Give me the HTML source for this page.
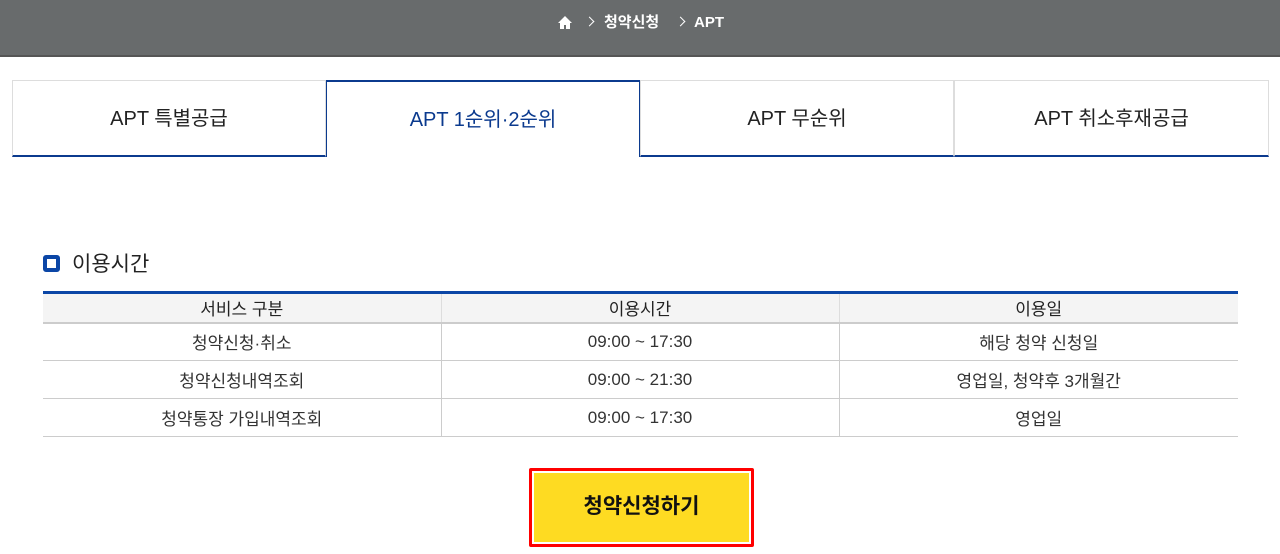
<!DOCTYPE html>
<html><head><meta charset="utf-8"><style>
*{margin:0;padding:0;box-sizing:border-box}
body{width:1280px;height:554px;background:#fff;font-family:"Liberation Sans","Noto Sans CJK KR",sans-serif;position:relative;overflow:hidden;color:#222}
.hd{position:absolute;left:0;top:0;width:1280px;height:57px;background:#686b6c;border-bottom:2px solid #555}
.bc{position:absolute;top:14px;color:#fff;font-size:15px;font-weight:bold;line-height:18px;white-space:nowrap}
.ch{position:absolute;top:13px;width:7px;height:7px;border-top:1.5px solid #fff;border-right:1.5px solid #fff;transform:rotate(45deg)}
.tab{position:absolute;top:80px;height:77px;width:314px;border:1px solid #ddd;border-bottom:2px solid #0b3a8e;text-align:center;line-height:76px;font-size:20px;color:#222}
.tab.on{border:1px solid #0b3a8e;border-top:2px solid #0b3a8e;border-bottom:none;color:#0b3a8e}
.tt{position:absolute;left:43px;top:252px;font-size:21px;line-height:26px}
.tt i{display:inline-block;width:17px;height:17px;border:4px solid #0b46a6;border-radius:3px;vertical-align:-1px;margin-right:12px}
table{position:absolute;left:43px;top:291px;width:1195px;border-collapse:collapse;border-top:3px solid #0b46a6;font-size:17px}
th{background:#f4f4f4;font-weight:normal;height:30px;border-bottom:2px solid #ccc;border-left:1px solid #ddd}
td{height:38px;text-align:center;border-bottom:1px solid #ccc;border-left:1px solid #ccc;color:#333}
th:first-child,td:first-child{border-left:none}
.btn{position:absolute;left:529px;top:468px;width:225px;height:79px;border:3px solid #f00;border-radius:2px;padding:2px}
.btn div{width:100%;height:100%;background:#fedb22;text-align:center;line-height:67px;font-size:21px;font-weight:bold;color:#111}
</style></head><body>
<div class="hd">
<svg width="14" height="13" viewBox="0 0 14 13" style="position:absolute;left:558px;top:16px"><path d="M7 0L0 7h2v6h4V9h2v4h4V7h2z" fill="#fff"/></svg>
<div class="ch" style="left:586px;top:18px"></div>
<div class="bc" style="left:604px">청약신청</div>
<div class="ch" style="left:677px;top:18px"></div>
<div class="bc" style="left:694px">APT</div>
</div>
<div class="tab" style="left:12px">APT 특별공급</div>
<div class="tab on" style="left:326px">APT 1순위·2순위</div>
<div class="tab" style="left:640px">APT 무순위</div>
<div class="tab" style="left:954px;width:315px">APT 취소후재공급</div>
<div class="tt"><i></i>이용시간</div>
<table>
<tr><th style="width:398px">서비스 구분</th><th style="width:398px">이용시간</th><th>이용일</th></tr>
<tr><td>청약신청·취소</td><td>09:00 ~ 17:30</td><td>해당 청약 신청일</td></tr>
<tr><td>청약신청내역조회</td><td>09:00 ~ 21:30</td><td>영업일, 청약후 3개월간</td></tr>
<tr><td>청약통장 가입내역조회</td><td>09:00 ~ 17:30</td><td>영업일</td></tr>
</table>
<div class="btn"><div>청약신청하기</div></div>
</body></html>
